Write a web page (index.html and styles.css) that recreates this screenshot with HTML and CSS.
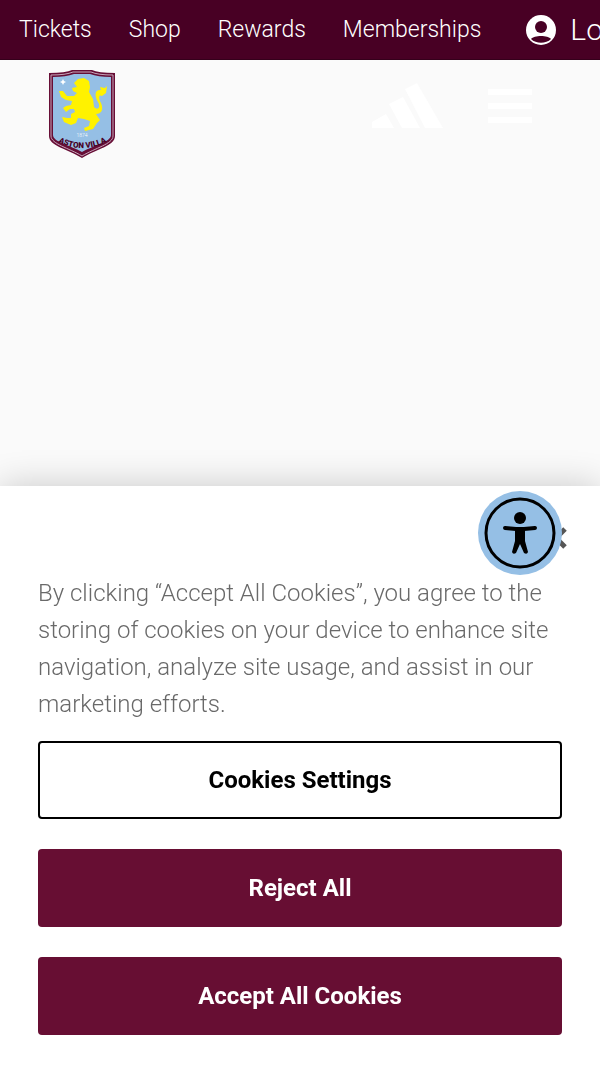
FILE: index.html
```
<!DOCTYPE html>
<html lang="en">
  <head>
    <meta charset="UTF-8" />
    <meta name="viewport" content="width=device-width, initial-scale=1.0" />
    <title>Aston Villa Football Club</title>
    <link rel="stylesheet" href="styles.css">
  </head>
  <body>
    <nav class="top-nav">
      <a href="#">Tickets</a>
      <a href="#">Shop</a>
      <a href="#">Rewards</a>
      <a href="#">Memberships</a>
      <a class="login" href="#">
        <svg class="user-icon" viewBox="0 0 30 30" aria-hidden="true">
          <circle cx="15" cy="15" r="15" fill="#fff" />
          <circle cx="15" cy="12" r="6" fill="#480024" />
          <path d="M5 24C8 20 22 20 25 24C20 29 10 29 5 24Z" fill="#480024" />
        </svg>
        Login
      </a>
    </nav>

    <header class="site-header">
      <a class="crest" href="#" aria-label="Home">
        <svg viewBox="0 0 68 90" width="68" height="90">
          <path d="M1 4Q18 4 24 1H44Q50 4 67 4V67C67 77 48 80 34 89C20 80 1 77 1 67Z" fill="#670e36" />
          <path d="M3 6Q18 6 25 3H43Q50 6 65 6V67C65 75 47 79 34 87C21 79 3 75 3 67Z" fill="none" stroke="#c5a5b9" stroke-width="1" />
          <path d="M5 8Q18 8 26 5H42Q50 8 63 8V66C63 73 46 76 34 83C22 76 5 73 5 66Z" fill="#95bfe5" />
          <path d="M15 10L16 12L18 13L16 14L15 16L14 14L12 13L14 12Z" fill="#fff" />
          <path d="M26 14L30 10L36 9L41 12L42 18L41 23L45 30L46 38C50 42 53 38 50 33C46 26 47 20 53 21L52 18L57 19L59 17L58 24L54 27C51 25 50 29 53 34C56 41 53 45 48 45L52 51L49 54L45 60L37 62L36 59L41 57L42 52L36 50L30 49L28 54L23 56L16 53L14 48L19 49L23 49L23 45L27 43L26 40L22 40L18 43L15 39L18 37L23 36L24 32L18 31L13 28L11 22L15 22L19 27L26 27L29 24L25 22L24 19L29 18Z" fill="#fff200" />
          <path id="motto" d="M10 73Q34 85 59 73" fill="none" />
          <text class="crest-year" x="34" y="68" text-anchor="middle">1874</text>
          <text class="crest-name" text-anchor="middle">
            <textPath href="#motto" startOffset="50%">ASTON VILLA</textPath>
          </text>
        </svg>
      </a>
      <a class="sponsor" href="#" aria-label="Adidas">
        <svg viewBox="0 0 72 46" width="72" height="46" fill="#fff">
          <path d="M0 39L14 31L22 45H0Z" />
          <path d="M17 21L31 14L48 45H30Z" />
          <path d="M33 6L45 0L71 45H53Z" />
        </svg>
      </a>
      <button class="menu-button" type="button" aria-label="Menu">
        <span></span>
        <span></span>
        <span></span>
      </button>
    </header>

    <section class="cookie-banner" aria-label="Cookie banner">
      <button class="close" type="button" aria-label="Close">
        <svg viewBox="0 0 24 24" width="24" height="24">
          <path d="M3 3L21 21M21 3L3 21" stroke="#565656" stroke-width="5" />
        </svg>
      </button>
      <p class="policy">
        By clicking “Accept All Cookies”, you agree to the storing of cookies on
        your device to enhance site navigation, analyze site usage, and assist
        in our marketing efforts.
      </p>
      <div class="actions">
        <button class="settings" type="button">Cookies Settings</button>
        <button type="button">Reject All</button>
        <button type="button">Accept All Cookies</button>
      </div>
      <button class="accessibility" type="button" aria-label="Accessibility menu">
        <svg viewBox="0 0 84 84" width="84" height="84">
          <circle cx="42" cy="42" r="42" fill="#95bfe5" />
          <circle cx="42" cy="42" r="34" fill="none" stroke="#000" stroke-width="3" />
          <circle cx="42" cy="27" r="6" />
          <path d="M27 37L38 38H46L57 37" fill="none" stroke="#000" stroke-width="4" stroke-linecap="round" />
          <path d="M37 37H47V50L50 61Q49 64 46 62L42 53L38 62Q35 64 34 61L37 50Z" />
        </svg>
      </button>
    </section>
  </body>
</html>
```
FILE: styles.css
```
* {
  box-sizing: border-box;
}

body {
  margin: 0;
  min-height: 100vh;
  overflow-x: hidden;
  background: #fafafa;
  font-family: Roboto, "Liberation Sans", sans-serif;
  font-weight: 300;
}

button {
  padding: 0;
  border: 0;
  background: none;
  font: inherit;
  cursor: pointer;
}

svg {
  display: block;
}

.top-nav {
  display: flex;
  align-items: center;
  gap: 37px;
  height: 60px;
  padding-left: 19px;
  overflow: hidden;
  background: #480024;
  border-bottom: 1px solid #35001b;
  white-space: nowrap;
}

.top-nav a {
  color: #fff;
  font-size: 23px;
  text-decoration: none;
}

.top-nav .login {
  display: flex;
  align-items: center;
  gap: 14px;
  margin-left: 8px;
  font-size: 30px;
}

.user-icon {
  width: 30px;
  height: 30px;
}

.site-header {
  display: flex;
  align-items: center;
  padding: 9px 68px 0 48px;
}

.sponsor {
  margin-left: auto;
  padding-bottom: 16px;
}

.menu-button {
  display: flex;
  flex-direction: column;
  gap: 8px;
  width: 44px;
  margin-left: 44px;
  padding-bottom: 16px;
}

.menu-button span {
  height: 6px;
  background: #fff;
}

.crest-year {
  fill: #fff;
  font-size: 5px;
}

.crest-name {
  fill: #480024;
  font-size: 8px;
  font-weight: 900;
}

.cookie-banner {
  position: fixed;
  right: 0;
  bottom: 0;
  left: 0;
  padding: 40px 38px 30px;
  background: #fff;
  box-shadow: 0 0 34px rgba(0, 0, 0, 0.2);
}

.close {
  display: block;
  margin: 0 -6px 0 auto;
}

.policy {
  margin: 25px 0 18px;
  color: #696969;
  font-size: 24px;
  line-height: 37px;
}

.actions {
  display: flex;
  flex-direction: column;
  gap: 30px;
}

.actions button {
  min-height: 78px;
  border-radius: 4px;
  background: #670e33;
  color: #fff;
  font-size: 24px;
  font-weight: 700;
}

.actions .settings {
  border: 2px solid #000;
  background: #fff;
  color: #000;
}

.accessibility {
  position: absolute;
  top: 5px;
  right: 38px;
}
```
